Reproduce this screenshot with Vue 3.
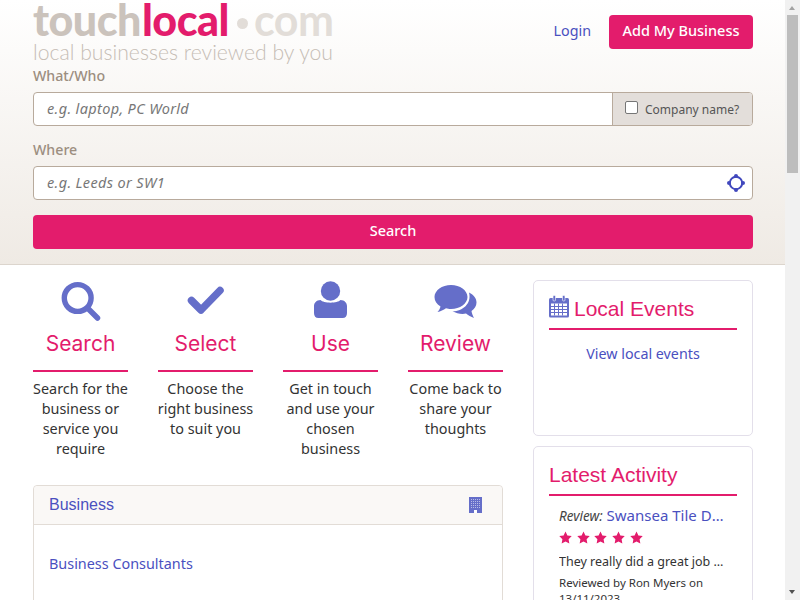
<script setup>
const steps = [
  { id: 'search', title: 'Search', text: 'Search for the business or service you require' },
  { id: 'select', title: 'Select', text: 'Choose the right business to suit you' },
  { id: 'use', title: 'Use', text: 'Get in touch and use your chosen business' },
  { id: 'review', title: 'Review', text: 'Come back to share your thoughts' },
]
const stars = [1, 2, 3, 4, 5]
</script>

<template>
  <div class="page">
    <header class="hero">
      <div class="wrap">
        <div class="top">
          <div class="logo">
            <div class="logo-main"><span class="lg-touch">touch</span><span class="lg-local">local</span><span class="lg-dot"></span><span class="lg-com">com</span></div>
            <div class="logo-tag">local businesses reviewed by you</div>
          </div>
          <nav class="nav">
            <a class="login">Login</a>
            <a class="add">Add My Business</a>
          </nav>
        </div>
        <label class="lbl lbl-what">What/Who</label>
        <div class="field">
          <span class="ph">e.g. laptop, PC World</span>
          <div class="addon"><span class="check"></span><span>Company name?</span></div>
        </div>
        <label class="lbl lbl-where">Where</label>
        <div class="field field-where">
          <span class="ph">e.g. Leeds or SW1</span>
          <svg class="target" width="18" height="18" viewBox="0 0 18 18">
            <circle cx="9" cy="9" r="6.2" fill="none" stroke="#4148bd" stroke-width="2" />
            <circle cx="9" cy="2" r="2" fill="#4148bd" />
            <circle cx="9" cy="16" r="2" fill="#4148bd" />
            <circle cx="2" cy="9" r="2" fill="#4148bd" />
            <circle cx="16" cy="9" r="2" fill="#4148bd" />
          </svg>
        </div>
        <button class="go">Search</button>
      </div>
    </header>

    <main class="wrap body">
      <section class="left">
        <div class="steps">
          <div v-for="s in steps" :key="s.id" class="step">
            <div class="ico">
              <svg width="60" height="44" viewBox="0 0 60 44">
                <g v-if="s.id === 'search'">
                  <circle cx="26.7" cy="21" r="13.4" fill="none" stroke="#656ec9" stroke-width="5.4" />
                  <path d="M37 31.500 L46.500 41" stroke="#656ec9" stroke-width="5.500" stroke-linecap="round" />
                </g>
                <path v-else-if="s.id === 'select'" d="M15.500 23.500 L25 33 L44 13.500" fill="none" stroke="#656ec9" stroke-width="7.500" stroke-linejoin="round" stroke-linecap="round" />
                <g v-else-if="s.id === 'use'" transform="translate(-.5 1)">
                  <circle cx="30" cy="13" r="9.7" fill="#656ec9" />
                  <path d="M20 22 C23 25.5 37 25.5 40 22 C44 22 46.5 25 46.5 28 L46.5 35 C46.5 38 45 40 42 40 L18 40 C15 40 13.5 38 13.5 35 L13.5 28 C13.5 25 16 22 20 22 Z" fill="#656ec9" />
                </g>
                <g v-else>
                  <path d="M43 15.500 C48 18 50.500 21.500 50.500 25.500 C50.500 29 48.500 32 45.500 34 C45.800 36 46.800 39 48 41 C45 40 42 38 40 36.500 C36 37.500 30.500 36.500 26.500 34.300 C36 34.500 46 27 43 15.500 Z" fill="#656ec9" />
                  <path d="M25 8 C34 8 41.500 13.500 41.500 20 C41.500 26.500 34 32 25 32 C23 32 21.500 31.700 20 31.300 C17.500 33 14.500 34.500 11.500 35 C13 33.500 14 31.500 14.500 29.500 C10.500 27 8.500 24 8.500 20 C8.500 13.500 16 8 25 8 Z" fill="#656ec9" />
                </g>
              </svg>
            </div>
            <h3 class="step-title">{{ s.title }}</h3>
            <p class="step-text">{{ s.text }}</p>
          </div>
        </div>

        <div class="panel">
          <div class="panel-head">
            <span>Business</span>
            <svg width="13" height="16" viewBox="0 0 13 16">
              <rect width="13" height="16" fill="#656ec9" />
              <path d="M2.500 2 V12 M4.500 2 V12 M6.500 2 V12 M8.500 2 V12 M10.500 2 V12" stroke="#b8bce6" stroke-width="1" stroke-dasharray="1 1" />
              <rect x="5" y="13" width="3" height="3" fill="#fff" />
            </svg>
          </div>
          <div class="panel-body"><a>Business Consultants</a></div>
        </div>
      </section>

      <aside class="right">
        <div class="card card-events">
          <h2 class="card-title">
            <svg class="cal" width="20" height="23" viewBox="0 0 20 23">
              <path d="M1.500 3 H18.500 Q20 3 20 4.500 V21 Q20 22.500 18.500 22.500 H1.500 Q0 22.500 0 21 V4.500 Q0 3 1.500 3 Z" fill="#656ec9" />
              <path d="M2 8.500 H18 V20.500 H2 Z" fill="#fff" />
              <path d="M2 11.500 H18 M2 14.500 H18 M2 17.500 H18 M5.500 8.500 V20.500 M9.500 8.500 V20.500 M13.500 8.500 V20.500" stroke="#656ec9" stroke-width="1" fill="none" />
              <rect x="4" y="0.500" width="2.500" height="5.500" rx="1" fill="#656ec9" stroke="#fff" stroke-width=".6" />
              <rect x="13.500" y="0.500" width="2.500" height="5.500" rx="1" fill="#656ec9" stroke="#fff" stroke-width=".6" />
            </svg>
            <span>Local Events</span>
          </h2>
          <a class="events-link">View local events</a>
        </div>
        <div class="card card-activity">
          <h2 class="card-title">Latest Activity</h2>
          <div class="activity">
            <div class="rev-line"><em>Review:</em> <a>Swansea Tile Design Ltd</a></div>
            <div class="stars">
              <svg v-for="n in stars" :key="n" width="13" height="13" viewBox="0 0 24 24">
                <path d="M12 .8 L15.500 8.200 L23.500 9.300 L17.700 15 L19.100 23.200 L12 19.300 L4.900 23.200 L6.300 15 L.5 9.300 L8.500 8.200 Z" fill="#e31c6c" />
              </svg>
            </div>
            <div class="quote">They really did a great job with our bathroom</div>
            <div class="by">Reviewed by Ron Myers on 13/11/2023</div>
          </div>
        </div>
      </aside>
    </main>

    <div class="scrollbar">
      <span class="arrow arrow-up"></span>
      <span class="thumb"></span>
      <span class="arrow arrow-down"></span>
    </div>
  </div>
</template>

<style>
html, body { margin: 0; padding: 0; overflow: hidden; }
</style>

<style scoped>
.page {
  font-family: "Noto Sans", "Open Sans", sans-serif;
  color: #333;
  width: 785px;
  height: 600px;
  overflow: hidden;
  background: #fff;
}
.wrap { width: 720px; margin: 0 32px 0 33px; }
.hero {
  height: 265px;
  box-sizing: border-box;
  border-bottom: 1px solid #dcd5cd;
  background: linear-gradient(#fff, #efeae4);
  padding-top: 5px;
}
.top { display: flex; justify-content: space-between; height: 59px; }
.logo { width: 301px; }
.logo-main {
  display: flex;
  align-items: center;
  height: 36px;
  margin: -3px 0 3px;
  font-family: Lato, sans-serif;
  font-weight: 900;
  font-size: 43px;
  line-height: 36px;
  letter-spacing: -0.5px;
}
.lg-touch { color: #cbc3bc; }
.lg-local { color: #e31c6c; margin-left: 1px; }
.lg-com { color: #e2ddd8; font-weight: 700; }
.lg-dot { flex: none; width: 11px; height: 11px; border-radius: 50%; background: #e2ddd8; margin: 6px 6px 0 8px; }
.logo-tag {
  font-family: Lato, sans-serif;
  font-weight: 300;
  font-size: 21.2px;
  line-height: 22px;
  color: #c6bdb5;
  white-space: nowrap;
}
.nav { display: flex; align-items: flex-start; padding-top: 10px; gap: 18px; }
.login { color: #4a50bf; font-size: 14.300px; line-height: 31px; height: 34px; }
.add {
  width: 144px;
  box-sizing: border-box;
  text-align: center;
  background: #e31c6c;
  color: #fff;
  font-size: 14.500px;
  font-weight: 500;
  line-height: 30px;
  height: 34px;
  border-radius: 4px;
}
.lbl { display: block; font-size: 14.200px; font-weight: 500; line-height: 20px; color: #9c8e80; }
.lbl-what { margin-bottom: 6px; margin-top: 2px; }
.lbl-where { margin: 14px 0 6px; }
.field {
  display: flex;
  align-items: center;
  height: 34px;
  box-sizing: border-box;
  background: #fff;
  border: 1px solid #b8aa9c;
  border-radius: 4px;
  position: relative;
}
.ph { flex: 1; padding: 0 0 2px 13px; font-size: 14.500px; letter-spacing: .35px; font-style: italic; color: #777; }
.addon {
  width: 140px;
  height: 100%;
  box-sizing: border-box;
  background: #e3deda;
  border-left: 1px solid #b8aa9c;
  border-radius: 0 3px 3px 0;
  display: flex;
  align-items: center;
  padding-left: 12px;
  font-size: 12px;
  color: #555;
  gap: 7px;
}
.check {
  width: 11px;
  height: 11px;
  border: 1px solid #767676;
  border-radius: 2px;
  background: #fff;
  margin-top: -4px;
}
.target { margin-right: 7px; }
.go {
  display: block;
  width: 100%;
  height: 34px;
  margin-top: 15px;
  padding: 0 0 4px;
  border: 0;
  border-radius: 4px;
  background: #e31c6c;
  color: #fff;
  font-family: inherit;
  font-size: 14.500px;
  font-weight: 500;
}
.body { display: flex; justify-content: space-between; padding-top: 15px; }
.left { width: 470px; }
.right { width: 220px; }
.steps { display: flex; justify-content: space-between; }
.step { width: 95px; text-align: center; }
.ico { height: 44px; display: flex; justify-content: center; }
.ico svg { flex: none; margin-top: -3px; }
.step-title {
  margin: 5px 0 0;
  height: 41px;
  line-height: 29px;
  font-family: Inter, sans-serif;
  font-size: 21px;
  font-weight: 400;
  color: #e31c6c;
  border-bottom: 2px solid #e31c6c;
  box-sizing: content-box;
}
.step-text { margin: 7px -3px 0; font-size: 14.400px; line-height: 20px; color: #333; height: 80px; }
.panel {
  margin-top: 26px;
  height: 400px;
  border: 1px solid #e2dcd6;
  border-radius: 4px;
}
.panel-head {
  height: 39px;
  box-sizing: border-box;
  display: flex;
  align-items: center;
  justify-content: space-between;
  padding: 0 20px 0 15px;
  background: #faf8f6;
  border-bottom: 1px solid #e2dcd6;
  border-radius: 4px 4px 0 0;
  font-family: "Liberation Sans", sans-serif;
  font-size: 16px;
  color: #4a50bf;
}
.panel-body { padding: 29px 15px; font-size: 14.400px; line-height: 20px; color: #4a50bf; }
.card {
  border: 1px solid #e3dfea;
  border-radius: 5px;
  box-sizing: border-box;
  padding: 10px 15px;
  margin-bottom: 10px;
}
.card-events { height: 156px; }
.card-activity { height: 400px; }
.card-title {
  margin: 0;
  height: 35px;
  padding-bottom: 2px;
  display: flex;
  align-items: center;
  gap: 5px;
  font-family: "Liberation Sans", sans-serif;
  font-size: 21px;
  font-weight: 400;
  color: #e31c6c;
  border-bottom: 2px solid #e31c6c;
  box-sizing: content-box;
}
.cal { margin-top: -5px; }
.events-link { display: block; text-align: center; font-size: 14.300px; line-height: 20px; margin-top: 14px; color: #4a50bf; }
.activity { padding: 9px 10px 0; }
.rev-line { white-space: nowrap; overflow: hidden; text-overflow: ellipsis; font-size: 15px; line-height: 20px; color: #4a50bf; }
.rev-line em { font-size: 13.500px; color: #444; }
.stars { display: flex; gap: 4.700px; margin-top: 5px; height: 16px; }
.quote { margin-top: 5px; white-space: nowrap; overflow: hidden; text-overflow: ellipsis; font-size: 12.500px; line-height: 20px; }
.by { margin-top: 3px; font-size: 11.500px; line-height: 16px; }
.scrollbar {
  position: fixed;
  top: 0;
  right: 0;
  bottom: 0;
  width: 15px;
  background: #f1f1f1;
}
.thumb { position: absolute; top: 15px; left: 2px; width: 11px; height: 158px; background: #bdbdbd; }
.arrow { position: absolute; left: 4px; width: 0; height: 0; border-left: 3.500px solid transparent; border-right: 3.500px solid transparent; }
.arrow-up { top: 6px; border-bottom: 4px solid #a3a3a3; }
.arrow-down { bottom: 6px; border-top: 4px solid #505050; }
</style>
